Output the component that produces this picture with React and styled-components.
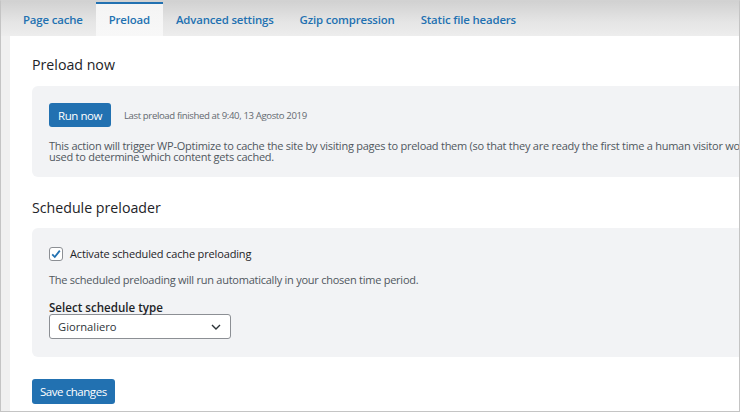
import React from "react";
import styled, { createGlobalStyle } from "styled-components";

const Global = createGlobalStyle`
  html, body {
    margin: 0;
    padding: 0;
    background: #ffffff;
  }
  * {
    box-sizing: border-box;
  }
`;

const Frame = styled.div`
  width: 740px;
  height: 412px;
  display: flex;
  flex-direction: column;
  overflow: hidden;
  background: #f0f0f0;
  border: 1px solid #c4c4c4;
  border-top-color: #d2d2d2;
  font-family: "Open Sans", "Noto Sans", sans-serif;
  color: #1d2327;
`;

const TabBar = styled.div`
  display: flex;
  height: 35px;
  padding-left: 9px;
  flex-shrink: 0;
  background: linear-gradient(#d1d1d1, #e5e5e5 60%, #ededed);
`;

const Tab = styled.div`
  display: flex;
  align-items: center;
  padding: 0 13px;
  font-size: 11.4px;
  font-weight: 600;
  letter-spacing: -0.15px;
  color: #2271b1;
  white-space: nowrap;
  background: ${(p) => (p.$active ? "linear-gradient(#f4f4f4, #f8f8f8)" : "transparent")};
  border-top: 2px solid ${(p) => (p.$active ? "#2271b1" : "transparent")};
  margin-top: 1px;
  padding-bottom: 2px;
`;

const Content = styled.div`
  flex: 1;
  margin-left: 9px;
  width: 800px;
  background: #ffffff;
  padding: 19px 0 0 22px;
`;

const Heading = styled.h2`
  margin: ${(p) => p.$top || 0}px 0 0;
  font-size: 14.2px;
  line-height: 20px;
  font-weight: 500;
  color: #1d2327;
`;

const Panel = styled.div`
  margin-top: ${(p) => p.$top}px;
  background: #f2f3f5;
  border-radius: 6px;
  padding: ${(p) => p.$pad};
`;

const Row = styled.div`
  display: flex;
  align-items: center;
  gap: ${(p) => p.$gap || 13}px;
`;

const Button = styled.button`
  height: ${(p) => p.$h || 24}px;
  padding: 0 ${(p) => p.$px || 9}px;
  border: none;
  border-radius: 3px;
  background: #2271b1;
  color: #ffffff;
  font-family: inherit;
  font-size: 11.5px;
  letter-spacing: -0.45px;
  cursor: pointer;
`;

const Muted = styled.span`
  font-size: 9.6px;
  letter-spacing: -0.38px;
  color: #646970;
`;

const Para = styled.p`
  margin: ${(p) => p.$margin};
  font-size: 11px;
  letter-spacing: -0.25px;
  line-height: ${(p) => p.$lh}px;
  color: #50575e;
  white-space: nowrap;
`;

const CheckBox = styled.span`
  width: 14px;
  height: 14px;
  border: 1px solid #8c8f94;
  border-radius: 3px;
  background: #ffffff;
  display: flex;
  align-items: center;
  justify-content: center;
`;

const CheckLabel = styled.span`
  font-size: 11px;
  font-weight: 500;
  letter-spacing: -0.15px;
  color: #1d2327;
`;

const FieldLabel = styled.div`
  margin-top: 12px;
  font-size: 11.6px;
  line-height: 13px;
  font-weight: 600;
  letter-spacing: 0;
  color: #1d2327;
`;

const Select = styled.div`
  width: 182px;
  height: 25px;
  display: flex;
  align-items: center;
  justify-content: space-between;
  padding: 0 9px 0 8px;
  border: 1px solid #8c8f94;
  border-radius: 3px;
  background: #ffffff;
  font-size: 11.2px;
  color: #2c3338;
`;

const Footer = styled.div`
  margin-top: 22px;
`;

const Check = () => (
  <svg width="12" height="12" viewBox="0 0 12 12">
    <path d="M2.2 6.3 L4.8 9 L9.8 2.6" fill="none" stroke="#2271b1" strokeWidth="1.8" />
  </svg>
);

const Chevron = () => (
  <svg width="10" height="6" viewBox="0 0 10 6">
    <path d="M1 1 L5 5 L9 1" fill="none" stroke="#2c3338" strokeWidth="1.4" />
  </svg>
);

const tabs = ["Page cache", "Preload", "Advanced settings", "Gzip compression", "Static file headers"];

export default function App() {
  return (
    <>
      <Global />
      <Frame>
        <TabBar>
          {tabs.map((t) => (
            <Tab key={t} $active={t === "Preload"}>
              {t}
            </Tab>
          ))}
        </TabBar>
        <Content>
          <Heading>Preload now</Heading>
          <Panel $top={11} $pad="17px 17px 15px">
            <Row>
              <Button>Run now</Button>
              <Muted>Last preload finished at 9:40, 13 Agosto 2019</Muted>
            </Row>
            <Para $margin="13px 0 0" $lh={11}>
              This action will trigger WP-Optimize to cache the site by visiting pages to preload them (so that they are ready the first time a human visitor would visit them), and these pages are
              <br />
              used to determine which content gets cached.
            </Para>
          </Panel>
          <Heading $top={21}>Schedule preloader</Heading>
          <Panel $top={10} $pad="18px 17px 18px">
            <Row $gap={7}>
              <CheckBox>
                <Check />
              </CheckBox>
              <CheckLabel>Activate scheduled cache preloading</CheckLabel>
            </Row>
            <Para $margin="10px 0 0" $lh={18}>
              The scheduled preloading will run automatically in your chosen time period.
            </Para>
            <FieldLabel>Select schedule type</FieldLabel>
            <Select>
              <span>Giornaliero</span>
              <Chevron />
            </Select>
          </Panel>
          <Footer>
            <Button $h={25} $px={8}>Save changes</Button>
          </Footer>
        </Content>
      </Frame>
    </>
  );
}
